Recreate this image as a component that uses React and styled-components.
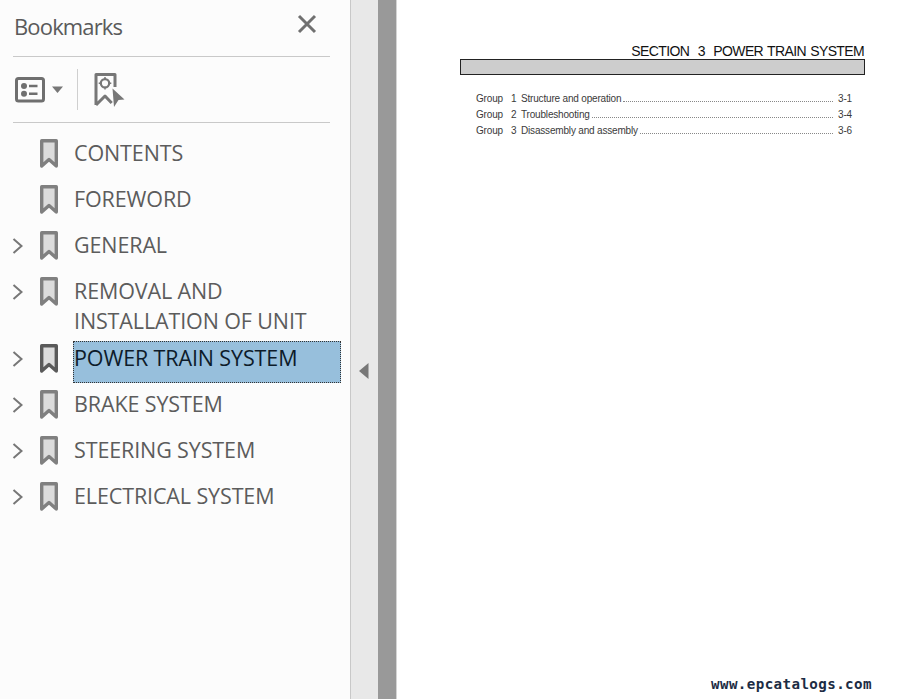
import React from "react";
import styled, { createGlobalStyle } from "styled-components";

const Global = createGlobalStyle`
  html, body { margin: 0; padding: 0; height: 100%; background: #fff; overflow: hidden; }
  #root { height: 100%; }
`;

const Layout = styled.div`
  display: flex;
  height: 699px;
  width: 923px;
  font-family: "Open Sans", "Liberation Sans", sans-serif;
`;

const Panel = styled.aside`
  width: 350px;
  flex: none;
  box-sizing: content-box;
  background: #fcfcfc;
  border-right: 1px solid #c8c8c8;
  display: flex;
  flex-direction: column;
`;

const PanelHeader = styled.header`
  height: 56px;
  margin: 0 20px 0 13px;
  padding: 0 4px 0 1px;
  border-bottom: 1px solid #c9c9c9;
  display: flex;
  align-items: flex-start;
  justify-content: space-between;
`;

const Title = styled.h1`
  margin: 10px 0 0;
  font-size: 22px;
  line-height: 32px;
  font-weight: 400;
  color: #5a5a5a;
  letter-spacing: -0.85px;
`;

const CloseButton = styled.div`
  width: 20px;
  height: 20px;
  margin: 14px 9px 0 0;
  display: flex;
`;

const Toolbar = styled.div`
  height: 65px;
  margin: 0 20px 0 13px;
  border-bottom: 1px solid #c9c9c9;
  display: flex;
  align-items: center;
`;

const OptionsIcon = styled.svg`
  margin-left: 2px;
  width: 48px;
  height: 28px;
`;

const ToolDivider = styled.div`
  width: 1px;
  height: 41px;
  margin: 0 16px 0 14px;
  background: #cfcfcf;
`;

const Tree = styled.ul`
  list-style: none;
  margin: 8px 0 0;
  padding: 0;
`;

const Row = styled.li`
  min-height: 46px;
  padding: 5px 9px 0 12px;
  box-sizing: border-box;
  display: flex;
  align-items: flex-start;
`;

const ChevronSlot = styled.div`
  width: 28px;
  height: 16px;
  margin-top: 9px;
  flex: none;
`;

const BookmarkGlyph = styled.svg`
  width: 18px;
  height: 30px;
  margin-top: 3px;
  flex: none;
`;

const Label = styled.div`
  flex: 1;
  margin: 0 0 -1px 15px;
  min-height: 42px;
  box-sizing: border-box;
  padding: 2px 0 1px 1px;
  font-size: 21.5px;
  line-height: 30px;
  letter-spacing: -0.12px;
  color: ${(p) => (p.$selected ? "#0d1b2a" : "#5c5c5c")};
  background: ${(p) => (p.$selected ? "#97bfdc" : "transparent")};
  outline: ${(p) => (p.$selected ? "1px dotted #333" : "none")};
  outline-offset: -1px;
`;

const Splitter = styled.div`
  width: 27px;
  flex: none;
  background: #e8e8e8;
  padding: 363px 2px 0 0;
  box-sizing: border-box;
  display: flex;
  justify-content: center;
`;

const Gutter = styled.div`
  width: 18px;
  flex: none;
  background: #999999;
  border-right: 1px solid #d4d4d4;
`;

const Page = styled.main`
  flex: 1;
  background: #fff;
  display: flex;
  flex-direction: column;
  padding: 43px 0 7px 63px;
  font-family: "Liberation Sans", Arial, sans-serif;
`;

const SectionTitle = styled.div`
  width: 404px;
  text-align: right;
  font-size: 14px;
  line-height: 16px;
  letter-spacing: -0.63px;
  word-spacing: 1px;
  color: #111;
  white-space: pre;
`;

const SectionBar = styled.div`
  width: 405px;
  height: 16px;
  box-sizing: border-box;
  border: 1px solid #222;
  background: #cdcdcd;
`;

const TocList = styled.div`
  width: 376px;
  margin: 15px 0 0 16px;
  display: flex;
  flex-direction: column;
`;

const TocRow = styled.div`
  height: 16px;
  display: flex;
  align-items: center;
  font-size: 10px;
  letter-spacing: -0.18px;
  color: #3a3a3a;
  white-space: pre;
`;

const TocGroup = styled.span`
  width: 35px;
`;

const TocNumber = styled.span`
  width: 10px;
`;

const Leader = styled.span`
  flex: 1;
  height: 6px;
  margin: 0 5px 0 2px;
  border-bottom: 1px dotted #888;
`;

const Watermark = styled.div`
  margin: auto 0 0 251px;
  line-height: 16px;
  font-family: "DejaVu Sans Mono", "Liberation Mono", monospace;
  font-weight: 700;
  font-size: 14.2px;
  letter-spacing: 0.4px;
  color: #1c2c44;
  white-space: pre;
`;

const Bookmark = ({ selected }) => (
  <BookmarkGlyph viewBox="0 0 18 30">
    <path
      d="M1.7 1.7H16.300V27L9 20.500L1.7 27Z"
      fill="#dcdcdc"
      stroke={selected ? "#5a5a5a" : "#808080"}
      strokeWidth="3.4"
      strokeLinejoin="round"
    />
  </BookmarkGlyph>
);

const Chevron = () => (
  <svg width="11" height="16" viewBox="0 0 11 16">
    <path d="M1.5 1L9.5 8L1.5 15" fill="none" stroke="#777" strokeWidth="2" />
  </svg>
);

const items = [
  { text: "CONTENTS" },
  { text: "FOREWORD" },
  { text: "GENERAL", expand: true },
  { text: <>REMOVAL AND<br />INSTALLATION OF UNIT</>, expand: true },
  { text: "POWER TRAIN SYSTEM", expand: true, selected: true },
  { text: "BRAKE SYSTEM", expand: true },
  { text: "STEERING SYSTEM", expand: true },
  { text: "ELECTRICAL SYSTEM", expand: true },
];

const toc = [
  ["1", "Structure and operation", "3-1"],
  ["2", "Troubleshooting", "3-4"],
  ["3", "Disassembly and assembly", "3-6"],
];

export default function App() {
  return (
    <Layout>
      <Global />
      <Panel>
        <PanelHeader>
          <Title>Bookmarks</Title>
          <CloseButton>
            <svg width="20" height="20" viewBox="0 0 20 20">
              <path d="M2 2L18 18M18 2L2 18" stroke="#707070" strokeWidth="3" />
            </svg>
          </CloseButton>
        </PanelHeader>
        <Toolbar>
          <OptionsIcon viewBox="0 0 48 28">
            <rect x="1.5" y="2.5" width="27" height="22.5" rx="2" fill="none" stroke="#6f6f6f" strokeWidth="3" />
            <circle cx="9" cy="10" r="3" fill="#6f6f6f" />
            <circle cx="9" cy="17.700" r="3" fill="#6f6f6f" />
            <path d="M14 10H22.500M14 17.700H22.500" stroke="#6f6f6f" strokeWidth="2.6" />
            <path d="M37 10.500H48L42.500 17Z" fill="#777" />
          </OptionsIcon>
          <ToolDivider />
          <svg width="32" height="34" viewBox="0 0 32 34">
            <path d="M2 32V1.500H21V14M2 32L11 23L17.700 30" fill="none" stroke="#777" strokeWidth="3" strokeLinejoin="round" />
            <circle cx="11" cy="10.300" r="4.2" fill="none" stroke="#777" strokeWidth="2.2" />
            <path d="M11 4V7M11 13.600V16.600M4.700 10.300H7.700M14.300 10.300H17.300" stroke="#777" strokeWidth="1.5" />
            <path d="M18.500 15.500L30.500 26.500L24.500 27L20 34Z" fill="#777" />
          </svg>
        </Toolbar>
        <Tree>
          {items.map((item, i) => (
            <Row key={i}>
              <ChevronSlot>{item.expand && <Chevron />}</ChevronSlot>
              <Bookmark selected={item.selected} />
              <Label $selected={item.selected}>{item.text}</Label>
            </Row>
          ))}
        </Tree>
      </Panel>
      <Splitter>
        <svg width="10" height="16" viewBox="0 0 10 16">
          <path d="M9.500 0V16L0 8Z" fill="#777" />
        </svg>
      </Splitter>
      <Gutter />
      <Page>
        <SectionTitle>SECTION  3  POWER TRAIN SYSTEM</SectionTitle>
        <SectionBar />
        <TocList>
          {toc.map(([n, title, page]) => (
            <TocRow key={n}>
              <TocGroup>Group</TocGroup>
              <TocNumber>{n}</TocNumber>
              <span>{title}</span>
              <Leader />
              <span>{page}</span>
            </TocRow>
          ))}
        </TocList>
        <Watermark>www.epcatalogs.com</Watermark>
      </Page>
    </Layout>
  );
}
